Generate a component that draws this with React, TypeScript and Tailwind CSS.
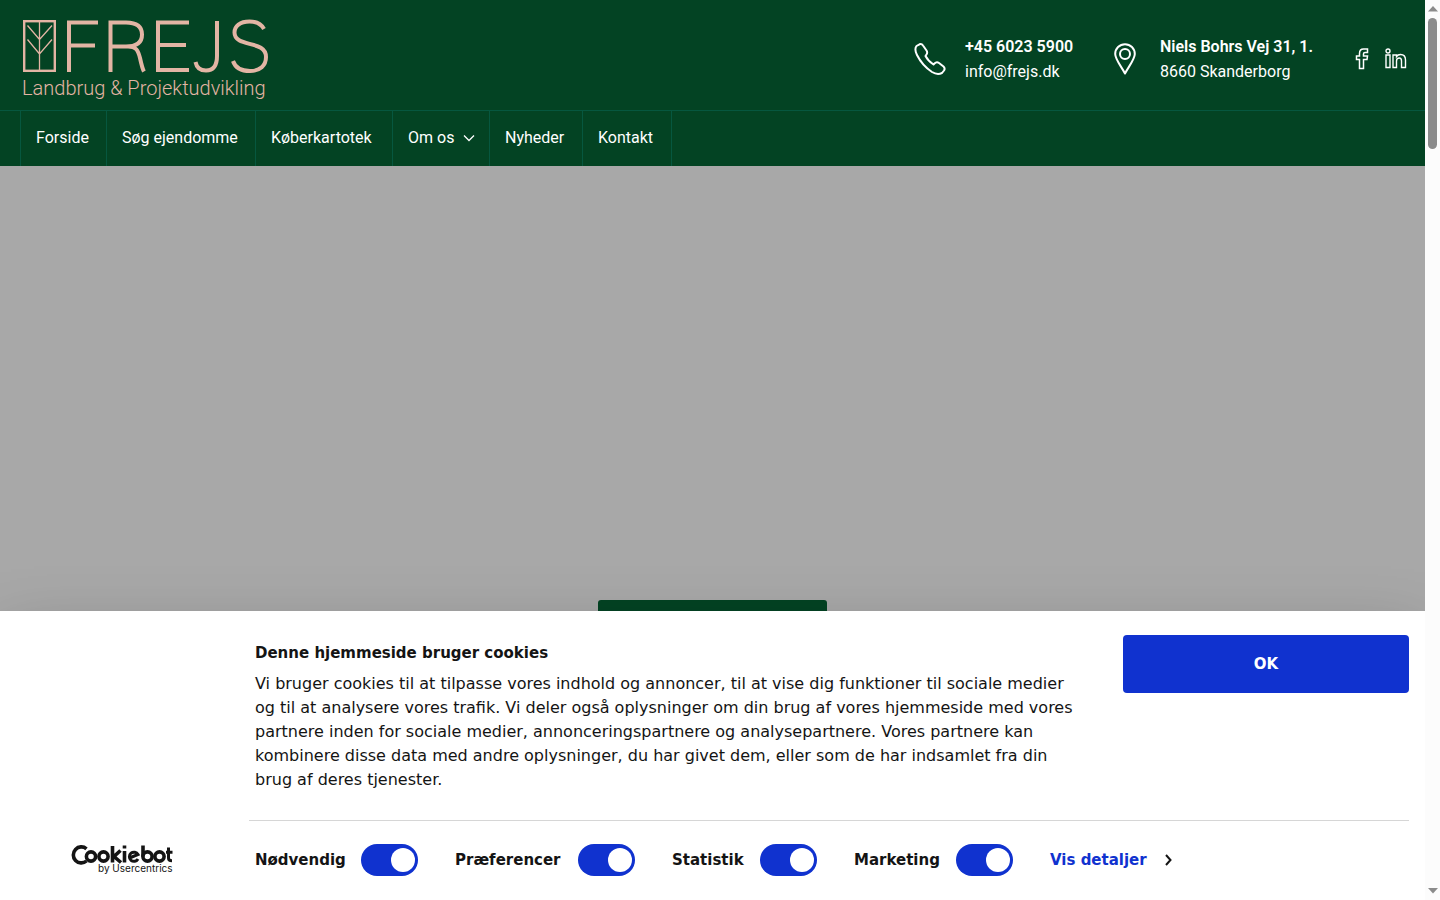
import React, { useState } from 'react';

const menu = [
  { label: 'Forside', width: 'w-[86px]' },
  { label: 'Søg ejendomme', width: 'w-[149px]' },
  { label: 'Køberkartotek', width: 'w-[137px]' },
  { label: 'Om os', width: 'w-[97px]', hasSubmenu: true },
  { label: 'Nyheder', width: 'w-[93px]' },
  { label: 'Kontakt', width: 'w-[89px]' },
];

const categories = [
  { id: 'necessary', label: 'Nødvendig', width: 'w-[163px]' },
  { id: 'preferences', label: 'Præferencer', width: 'w-[180px]' },
  { id: 'statistics', label: 'Statistik', width: 'w-[145px]' },
  { id: 'marketing', label: 'Marketing', width: 'w-[159px]' },
];

const Logo: React.FC = () => (
  <a href="#" aria-label="Frejs Landbrug & Projektudvikling" className="block text-[#e3b5a4]">
    <svg width="248" height="84" viewBox="0 0 248 84" fill="none" stroke="currentColor">
      <rect x="2.2" y="4.2" width="30.6" height="49.6" strokeWidth="2.4" />
      <path d="M17.500 4v50M5.500 8.500 17.500 22.500 30 8.500M5.500 22.500 17.500 37 30 22.500" strokeWidth="1.300" />
      {/* wordmark */}
      <g strokeWidth="4">
        <path d="M47 55V5.500H76M47 28.500H73" />
        <path d="M88.500 55V5.500H104C115 5.500 120 10 120 17.500S115 29.500 104 29.500H88.500M106 29.500C114 29.500 116 33 118 41 119.500 48 120.500 52 122 54.500" />
        <path d="M167 5.500H136V53H167M136 28H164" />
        <path d="M195 4V39C195 48 191.500 53.500 184 53.500 178 53.500 174.500 50 173.500 45" />
        <path d="M242 12C239.500 7.500 234 4.500 227.500 4.500 218 4.500 212.500 9 212.500 15.500 212.500 31 244 22.500 244 40 244 48.500 238 54 228 54 219 54 213 50 211 44" />
      </g>
      <text x="0" y="78" fill="currentColor" stroke="none" className="font-['Roboto',sans-serif] text-[20px] font-light">
        Landbrug &amp; Projektudvikling
      </text>
    </svg>
  </a>
);

const PhoneIcon: React.FC = () => (
  <svg width="32" height="32" viewBox="0 0 32 32" fill="none" stroke="currentColor" strokeWidth="2" strokeLinejoin="round">
    <path d="M5.500 1.300 2.500 3C1 5 1 8 3 12 6 18 12 25 18 29 22 31.500 25 31.500 28 30L30 27.500C31 26 31 25 29.500 23.500L25 20C23.500 19 22 19 20.500 20.500L19.500 21.500C16.500 19.500 13 16 11.500 13L12.500 11.500C13.500 10 13.500 9 12.500 7.500L9 2.500C8 1 7 .800 5.500 1.300Z" />
  </svg>
);

const PinIcon: React.FC = () => (
  <svg width="22" height="32" viewBox="0 0 22 32" fill="none" stroke="currentColor" strokeWidth="2" strokeLinejoin="round">
    <path d="M11 30.500C8 24.500 1.200 16.500 1.200 11A9.800 9.800 0 0 1 20.800 11C20.800 16.500 14 24.500 11 30.500Z" />
    <circle cx="11" cy="11" r="5" />
  </svg>
);

const CookiebotLogo: React.FC = () => (
  <svg width="104" height="32" viewBox="0 0 104 32" fill="none" aria-label="Cookiebot by Usercentrics">
    <g stroke="#141414" strokeWidth="3.600">
      <path d="M15.500 4.800A8 8 0 1 0 15.500 17" />
      <circle cx="20" cy="12.500" r="4.600" />
      <circle cx="32.500" cy="12.500" r="4.600" />
      <path d="M41.500 2V18.500M49.500 6.500 43 12.500 50 18.500M53.500 7V18.500M53.500 1.500V4.500" />
      <path d="M58.500 14 67 10.500A4.600 4.600 0 1 0 67 15" strokeWidth="3" />
      <circle cx="76.500" cy="12.500" r="4.600" />
      <path d="M72 1.500V12.500" />
      <circle cx="88.500" cy="12.500" r="4.600" />
      <path d="M97.500 3.500V14C97.500 16 98.500 16.800 101 16.800M95 8.300H101.500" strokeWidth="3" />
    </g>
    <text x="27" y="28" fill="#141414" className="font-['Inter',sans-serif] text-[10px]">
      by Usercentrics
    </text>
  </svg>
);

const Header: React.FC = () => (
  <header className="shrink-0 bg-[#034323] font-['Roboto',sans-serif] text-white">
    <div className="flex h-[110px] items-center justify-between pl-[22px] pr-[18px] pt-[7px]">
      <Logo />
      <div className="flex items-center">
        <PhoneIcon />
        <div className="ml-[19px] w-[111px] text-base leading-[25px]">
          <a href="tel:+4560235900" className="block font-semibold">+45 6023 5900</a>
          <a href="mailto:info@frejs.dk" className="block">info@frejs.dk</a>
        </div>
        <span className="ml-[38px]"><PinIcon /></span>
        <address className="ml-6 w-[162px] text-base leading-[25px] not-italic">
          <p className="whitespace-nowrap font-semibold">Niels Bohrs Vej 31, 1.</p>
          <p>8660 Skanderborg</p>
        </address>
        <a href="#" aria-label="Facebook" className="ml-[33px]">
          <svg width="14" height="22" viewBox="0 0 14 22" fill="none" stroke="currentColor" strokeWidth="1.500">
            <path d="M4.500 20.500V11.500H1.500V8H4.500V5.500C4.500 2.500 6 1 8.500 1H12.500V4.500H10C9 4.500 8.500 5 8.500 6V8H12.500L12 11.500H8.500V20.500Z" />
          </svg>
        </a>
        <a href="#" aria-label="LinkedIn" className="ml-4">
          <svg width="22" height="22" viewBox="0 0 22 22" fill="none" stroke="currentColor" strokeWidth="1.400">
            <circle cx="3" cy="3" r="2" />
            <path d="M1 7H5V19.500H1ZM8 7H11.500V8.500C12.500 7 14 6.500 15.500 6.500 19 6.500 20.500 8.500 20.500 12V19.500H16.500V13C16.500 11 16 10 14.300 10 12.500 10 11.500 11 11.500 13V19.500H8Z" />
          </svg>
        </a>
      </div>
    </div>
    <nav className="flex h-14 border-t border-[#06573f] pl-5 text-base">
      {menu.map((item) => (
        <a
          key={item.label}
          href="#"
          className={`flex items-center border-r border-[#06573f] pb-[2px] pl-[15px] first:box-content first:w-[70px] first:border-l ${item.width}`}
        >
          {item.label}
          {item.hasSubmenu && (
            <svg className="ml-[9px]" width="12" height="8" viewBox="0 0 12 8" fill="none" stroke="currentColor" strokeWidth="1.300">
              <path d="m1 1.500 5 5 5-5" />
            </svg>
          )}
        </a>
      ))}
    </nav>
  </header>
);

const CookieBanner: React.FC = () => {
  const [enabled, setEnabled] = useState<Record<string, boolean>>({
    necessary: true,
    preferences: true,
    statistics: true,
    marketing: true,
  });

  return (
    <section
      role="dialog"
      aria-label="Cookies"
      className="relative shrink-0 bg-white font-['DejaVu_Sans',sans-serif] text-[15px] text-[#141414] shadow-[0_32px_68px_rgba(0,0,0,0.3)]"
    >
      <div className="flex pl-[255px] pr-4 pt-6">
        <div className="flex-1 pt-[6px]">
          <h2 className="font-bold leading-6">Denne hjemmeside bruger cookies</h2>
          <p className="mt-[7px] max-w-[820px] text-base leading-6">
            Vi bruger cookies til at tilpasse vores indhold og annoncer, til at vise dig funktioner til sociale medier
            og til at analysere vores trafik. Vi deler også oplysninger om din brug af vores hjemmeside med vores
            partnere inden for sociale medier, annonceringspartnere og analysepartnere. Vores partnere kan
            kombinere disse data med andre oplysninger, du har givet dem, eller som de har indsamlet fra din
            brug af deres tjenester.
          </p>
        </div>
        <button className="ml-12 h-[58px] w-[286px] rounded bg-[#1032cf] font-bold text-white">OK</button>
      </div>
      <div className="ml-[249px] mr-4 mt-7 border-t border-[#d6d6d6]" />
      <div className="mb-px flex h-[78px] items-center pl-[71px]">
        <a href="#" className="w-[184px]"><CookiebotLogo /></a>
        {categories.map((category) => (
          <label key={category.id} className={`mr-[37px] flex items-center justify-between font-bold ${category.width}`}>
            {category.label}
            <input
              type="checkbox"
              checked={enabled[category.id]}
              onChange={(e) => setEnabled({ ...enabled, [category.id]: e.target.checked })}
              className="h-8 w-[57px] appearance-none rounded-full bg-[#d6d6d6] p-1 before:block before:size-6 before:rounded-full before:bg-white checked:bg-[#1032cf] checked:before:ml-[26px]"
            />
          </label>
        ))}
        <a href="#" className="flex items-center gap-[18px] font-bold text-[#1032cf]">
          Vis detaljer
          <svg width="7" height="12" viewBox="0 0 7 12" fill="none" stroke="#141414" strokeWidth="2">
            <path d="m1 1 4.500 5L1 11" />
          </svg>
        </a>
      </div>
    </section>
  );
};

const ScrollTrack: React.FC = () => (
  <div className="flex w-[15px] shrink-0 flex-col items-center bg-[#fcfcfc] py-[6px]">
    <svg width="10" height="6" viewBox="0 0 10 6" fill="#8b8b8b"><path d="M0 5.500 5 0l5 5.500Z" /></svg>
    <div className="mt-[6px] h-[131px] w-[9px] rounded-full bg-[#8b8b8b]" />
    <svg className="mt-auto" width="10" height="6" viewBox="0 0 10 6" fill="#8b8b8b"><path d="M0 0h10L5 5.500Z" /></svg>
  </div>
);

const App: React.FC = () => {
  return (
    <div className="flex h-screen overflow-hidden">
      <div className="flex min-w-0 flex-1 flex-col overflow-hidden">
        <Header />
        <main className="flex flex-1 items-end justify-center bg-[#a8a8a8]">
          <button aria-label="Søg ejendomme" className="h-[11px] w-[229px] rounded-t-[3px] bg-[#034323]" />
        </main>
        <CookieBanner />
      </div>
      <ScrollTrack />
    </div>
  );
};

export default App;
